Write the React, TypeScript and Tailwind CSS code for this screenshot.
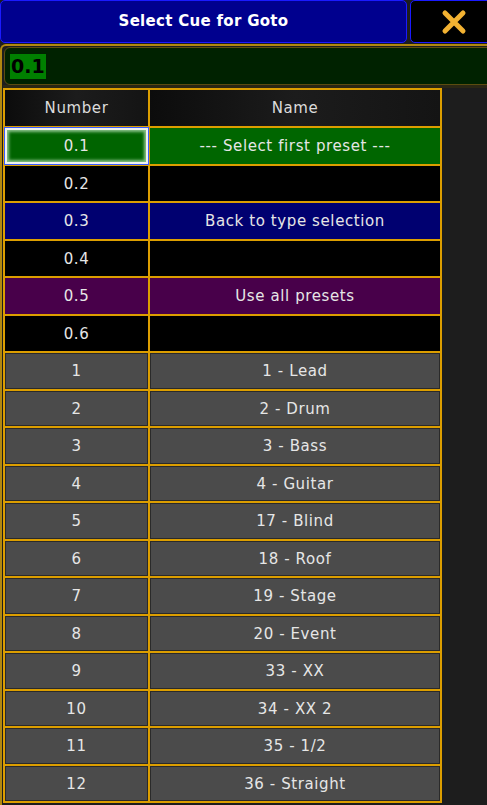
import React from "react";

type Kind = "sel" | "black" | "blue" | "purple" | "gray";
const rows: { n: string; name: string; kind: Kind }[] = [
  { n: "0.1", name: "--- Select first preset ---", kind: "sel" },
  { n: "0.2", name: "", kind: "black" },
  { n: "0.3", name: "Back to type selection", kind: "blue" },
  { n: "0.4", name: "", kind: "black" },
  { n: "0.5", name: "Use all presets", kind: "purple" },
  { n: "0.6", name: "", kind: "black" },
  { n: "1", name: "1 - Lead", kind: "gray" },
  { n: "2", name: "2 - Drum", kind: "gray" },
  { n: "3", name: "3 - Bass", kind: "gray" },
  { n: "4", name: "4 - Guitar", kind: "gray" },
  { n: "5", name: "17 - Blind", kind: "gray" },
  { n: "6", name: "18 - Roof", kind: "gray" },
  { n: "7", name: "19 - Stage", kind: "gray" },
  { n: "8", name: "20 - Event", kind: "gray" },
  { n: "9", name: "33 - XX", kind: "gray" },
  { n: "10", name: "34 - XX 2", kind: "gray" },
  { n: "11", name: "35 - 1/2", kind: "gray" },
  { n: "12", name: "36 - Straight", kind: "gray" },
];

function numClass(k: Kind) {
  switch (k) {
    case "sel":
      return "bg-[#006400] border-2 border-[#eef2ee] outline outline-1 outline-[#3a5cff] shadow-[inset_0_0_3px_2px_#88c088]";
    case "black":
      return "bg-black";
    case "blue":
      return "bg-[#000070]";
    case "purple":
      return "bg-[#48004a]";
    default:
      return "bg-[#4b4b4b] shadow-[inset_0_0_0_1px_#2a2a2a]";
  }
}
function nameClass(k: Kind) {
  switch (k) {
    case "sel":
      return "bg-[#006600]";
    case "black":
      return "bg-black";
    case "blue":
      return "bg-[#000070]";
    case "purple":
      return "bg-[#48004a]";
    default:
      return "bg-[#4b4b4b] shadow-[inset_0_0_0_1px_#2a2a2a]";
  }
}

export default function App() {
  return (
    <div
      className="w-[487px] h-[805px] bg-[#1d1d1d] overflow-hidden flex flex-col text-[#e6e6e6]"
      style={{ fontFamily: '"DejaVu Sans", sans-serif' }}
    >
      <div className="flex h-[43px] gap-[3px] shrink-0">
        <div className="w-[407px] shrink-0 rounded-[5px] border border-[#1a1aff] bg-[#00008e] flex items-center justify-center text-white font-bold text-[15px] tracking-[0.3px]">
          Select Cue for Goto
        </div>
        <div className="w-[87px] shrink-0 rounded-[5px] border border-[#1a1aff] bg-black flex items-center justify-center">
          <svg width="26" height="26" viewBox="0 0 26 26">
            <path d="M4 4 L22 22 M22 4 L4 22" stroke="#f2b232" strokeWidth="5" strokeLinecap="round" fill="none" />
          </svg>
        </div>
      </div>
      <div className="mt-[1px] flex-1 border-t-2 border-l-2 border-[#b08810] rounded-tl-[6px] pl-[1px] pt-[1px] flex flex-col">
        <div className="h-[38px] ml-[1px] mr-[-10px] rounded-l-[6px] border border-[#5c4c10] bg-[#002200] flex items-center pl-[5px] shrink-0">
          <span className="bg-[#008000] text-black text-[19px] leading-[25px] font-semibold px-[1px]">0.1</span>
        </div>
        <div className="h-[3px] bg-[#2b2714] mr-[-10px] shrink-0" />
        <div
          className="w-[439px] bg-[#dc9e00] p-[2px] grid gap-[2px] grid-cols-[143px_1fr] text-[15px] tracking-[0.6px]"
          style={{ gridTemplateRows: "36px repeat(18, 35.5px)" }}
        >
          <div className="bg-gradient-to-r from-[#0c0c0c] via-[#1c1c1c] to-[#141414] flex items-center justify-center text-[#dcdcdc] pt-[1px]">
            Number
          </div>
          <div className="bg-gradient-to-r from-[#0c0c0c] via-[#1c1c1c] to-[#141414] flex items-center justify-center text-[#dcdcdc] pt-[1px]">
            Name
          </div>
          {rows.map((r) => (
            <React.Fragment key={r.n}>
              <div className={"flex items-center justify-center pt-[1px] " + numClass(r.kind)}>{r.n}</div>
              <div className={"flex items-center justify-center pt-[1px] " + nameClass(r.kind)}>{r.name}</div>
            </React.Fragment>
          ))}
        </div>
      </div>
    </div>
  );
}
